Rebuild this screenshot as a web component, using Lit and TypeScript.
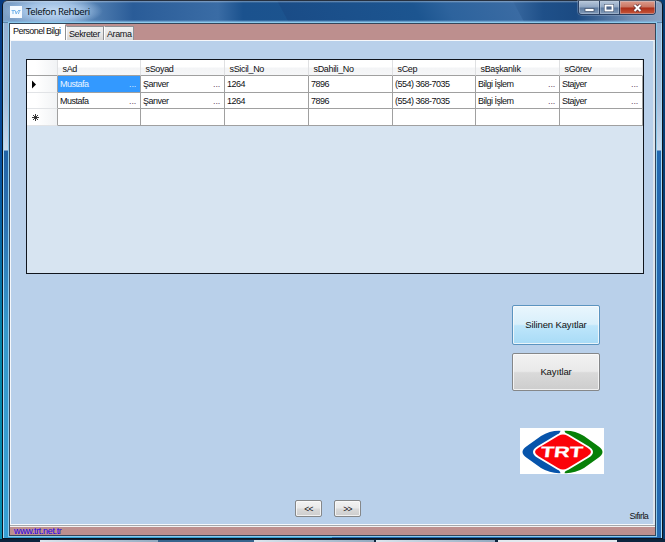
import { LitElement, html, css, svg } from "lit";
import { customElement, property } from "lit/decorators.js";

const COLUMNS = ["sAd", "sSoyad", "sSicil_No", "sDahili_No", "sCep", "sBaşkanlık", "sGörev"];
const RECORD = ["Mustafa", "Şanver", "1264", "7896", "(554) 368-7035", "Bilgi İşlem", "Stajyer"];
const TRUNCATED = [0, 1, 5, 6];

@customElement("title-bar")
class TitleBar extends LitElement {
  static styles = css`
    :host {
      display: flex;
      height: 23px;
      box-sizing: border-box;
      border-top: 1px solid #26303f;
      border-radius: 5px 5px 0 0;
      background:
        linear-gradient(#ffffff66, #ffffff00 2px),
        radial-gradient(ellipse 50px 15px at 50px 10px, #c3daf3 0, #a9c8eae0 55%, #a9c8ea00 100%),
        linear-gradient(#ffffff00 19px, #7fb3dd 21px, #35597b 22px),
        linear-gradient(62deg, #ffffff00 252px, #1a4c87 253px, #1c5590 370px, #2d639d 400px, #3a6ba3 460px, #ffffff00 461px),
        linear-gradient(90deg, #7d9fc6 0, #5c88b8 80px, #2a5c98 130px, #3a6ca5 215px, #1b528e 240px, #1d568f 370px, #31659c 420px, #3c6ca3 505px, #1f5089 540px, #1b4a82 573px, #7590b4 630px, #8ba3c2 100%);
    }
    .icon {
      width: 12px;
      height: 12px;
      margin: 5px 0 0 7px;
      background: #f5faff;
      flex: none;
    }
    .icon svg { display: block; }
    .title {
      margin: 4px 0 0 4px;
      font: 9.5px/13px "Noto Sans", sans-serif;
      letter-spacing: -0.4px;
      color: #0b1524;
      flex: 1;
    }
    .controls {
      display: flex;
      height: 14px;
      margin-right: 6px;
      border: 1px solid #2b4164;
      border-top: 0;
      border-radius: 0 0 4px 4px;
      box-sizing: border-box;
      box-shadow: 0 0 0 1px #a7bad255;
      overflow: hidden;
    }
    .control {
      width: 20px;
      border-right: 1px solid #2b4164;
      background: linear-gradient(#b6c6da, #8fa5c2 48%, #5c799f 52%, #829ab8);
      box-shadow: inset 0 0 0 1px #c8d5e466;
    }
    .control.max { width: 19px; }
    .control.close {
      width: 35px;
      border: 0;
      background: linear-gradient(#dd9c8c, #c97460 48%, #ab2d17 52%, #c8563a);
    }
    .control svg { display: block; width: 100%; height: 13px; }
  `;
  render() {
    return html`
      <div class="icon">
        <svg width="12" height="12" viewBox="0 0 12 12">
          <path d="M1.500 4.500H5M3 4.500V8M5.200 4.500L6.200 8L7.500 5M8 4.500H10.500M9.500 4.500L8.400 8" fill="none" stroke="#75b4ea" stroke-width="1" />
        </svg>
      </div>
      <div class="title">Telefon Rehberi</div>
      <div class="controls">
        <div class="control">
          <svg viewBox="0 0 20 13"><rect x="6" y="7.500" width="9" height="3" fill="#fff" stroke="#475873" stroke-width=".8" /></svg>
        </div>
        <div class="control max">
          <svg viewBox="0 0 19 13">
            <rect x="5.500" y="4.500" width="7" height="5" fill="none" stroke="#475873" stroke-width="3" />
            <rect x="5.500" y="4.500" width="7" height="5" fill="#50678a" stroke="#fff" stroke-width="1.800" />
          </svg>
        </div>
        <div class="control close">
          <svg viewBox="0 0 35 13">
            <path d="M14.500 4L20.500 10M20.500 4L14.500 10" stroke="#5f3238" stroke-width="3.600" />
            <path d="M14.500 4L20.500 10M20.500 4L14.500 10" stroke="#fff" stroke-width="2" />
          </svg>
        </div>
      </div>
    `;
  }
}

@customElement("data-grid")
class DataGrid extends LitElement {
  static styles = css`
    :host {
      display: block;
      box-sizing: border-box;
      width: 618px;
      height: 215px;
      border: 1px solid #10151d;
      background: #d7e4f1;
      font: 9px/11px "Liberation Sans", Arial, sans-serif;
      color: #101014;
    }
    .row {
      display: grid;
      grid-template-columns: 31px 83px 84px 84px 84px 83px 84px 83px;
      height: 16px;
      background: #fff;
    }
    .cell {
      display: flex;
      justify-content: space-between;
      box-sizing: border-box;
      border-right: 1px solid #a0a0a0;
      border-bottom: 1px solid #a0a0a0;
      padding: 3px 4px 0 2px;
      letter-spacing: -0.5px;
      white-space: nowrap;
      overflow: hidden;
    }
    .cell.number { letter-spacing: -0.5px; padding-left: 2px; }
    .row.head .cell {
      padding: 4px 0 0 4.5px;
      letter-spacing: -0.34px;
      border-right-color: #dfe0e2;
      background: linear-gradient(#fff 45%, #f3f4f6 55%, #f6f7f8);
    }
    .row.tall { height: 17px; }
    .row .cell.marker {
      padding: 0;
      border-bottom-color: #e1e3e6;
      background: linear-gradient(90deg, #fff 30%, #f1f3f5);
    }
    .row.head .cell.marker { border-bottom-color: #a0a0a0; }
    .marker svg { display: block; }
    .cell.selected { background: #3399ff; color: #eaf5ff; }
    .dots { color: #6c4668; letter-spacing: -0.2px; }
    .selected .dots { color: #d8edff; }
  `;
  private marker(kind: string) {
    const shape = kind === "current"
      ? svg`<path d="M5 4.500L9 8.500L5 12.500Z" fill="#000" />`
      : kind === "new"
        ? svg`<path d="M8.500 5V12M5 8.500H12M6 6L11 11M11 6L6 11" stroke="#222" stroke-width=".9" />`
        : null;
    return html`<div class="cell marker"><svg width="20" height="16">${shape}</svg></div>`;
  }
  private record(kind: string) {
    return html`<div class="row ${kind === "current" ? "tall" : ""}">
      ${this.marker(kind)}
      ${RECORD.map((value, i) => html`
        <div class="cell ${/^[\d(]/.test(value) ? "number" : ""} ${kind === "current" && i === 0 ? "selected" : ""}">
          <span>${value}</span>${TRUNCATED.includes(i) ? html`<span class="dots">...</span>` : null}
        </div>`)}
    </div>`;
  }
  render() {
    return html`
      <div class="row head">
        <div class="cell marker"></div>
        ${COLUMNS.map((name) => html`<div class="cell">${name}</div>`)}
      </div>
      ${this.record("current")} ${this.record("")}
      <div class="row tall">${this.marker("new")}${COLUMNS.map(() => html`<div class="cell"></div>`)}</div>
    `;
  }
}

@customElement("form-button")
class FormButton extends LitElement {
  @property() label = "";
  static styles = css`
    :host { display: block; }
    button {
      display: block;
      width: 100%;
      height: 100%;
      padding: 0;
      border: 1px solid #858789;
      border-radius: 2px;
      background: linear-gradient(#f2f2f2, #e9e9e9 48%, #dadada 52%, #cdcdcd);
      box-shadow: inset 0 0 0 1px #fafafacc;
      font: 9.5px/12px "Liberation Sans", Arial, sans-serif;
      letter-spacing: -0.13px;
      color: #111;
      white-space: nowrap;
    }
    :host(.hot) button {
      border-color: #5b94c0;
      background: linear-gradient(#e9f6fd, #d8effb 48%, #bee6fb 52%, #a8dbf6);
    }
    :host(.nav) button { font-size: 8.5px; letter-spacing: -0.6px; }
  `;
  render() {
    return html`<button>${this.label}</button>`;
  }
}

@customElement("trt-logo")
class TrtLogo extends LitElement {
  static styles = css`
    :host { display: block; width: 84px; height: 46px; background: #fff; }
    svg { display: block; }
    text { font: bold 15px "Liberation Sans", Arial, sans-serif; fill: #fff; stroke: #fff; stroke-width: .3px; }
  `;
  render() {
    return html`<svg width="84" height="46" viewBox="0 0 84 46">
      <path d="M42 3Q31 2 21 8L7 18Q-2 24 7 30L21 40Q31 46 42 45Z" fill="#0754ab" />
      <path d="M43 3Q54 2 64 8L78 18Q87 24 78 30L64 40Q54 46 43 45Z" fill="#078008" />
      <path d="M41 2H44L46 6H39ZM41 46H44L46 42H39Z" fill="#fff" />
      <path d="M38 7Q43 4 48 7L68 19Q76 24 68 29L48 41Q43 44 38 41L18 29Q10 24 18 19Z" fill="#fb0309" stroke="#fff" stroke-width="2" />
      <text x="20.500" y="29.300" transform="skewX(-7) translate(3.400 0)" textLength="42" lengthAdjust="spacingAndGlyphs">TRT</text>
    </svg>`;
  }
}

@customElement("app-root")
class AppRoot extends LitElement {
  static styles = css`
    :host {
      display: flex;
      flex-direction: column;
      width: 665px;
      height: 542px;
      overflow: hidden;
      background: linear-gradient(90deg, #ffffff00 50%, #063d73 50%), linear-gradient(#073a80, #064d9d 150px, #0585a8 350px, #078eb2);
      font: 9px/11px "Liberation Sans", Arial, sans-serif;
      color: #101014;
    }
    .window {
      display: flex;
      flex-direction: column;
      height: 539px;
      box-sizing: border-box;
      margin: 0 2px 0 2px;
      border: 1px solid #0c1420;
      border-top: 0;
      border-radius: 6px 6px 0 0;
      background:
        linear-gradient(90deg, #a6d8f5 1px, #ffffff00 1px, #ffffff00 658px, #a6d8f5 658px),
        linear-gradient(90deg, #ffffff00 50%, #8da5c500 50%) 0 0 / 100% 151px no-repeat,
        linear-gradient(90deg, #ffffff00 50%, #2369b0 50%) 0 151px no-repeat,
        linear-gradient(#8facd0 0, #a9bfdc 100px, #cbdaec 150px, #2163a6 151px, #2b71b1 220px, #3599cc 330px, #36a0d4);
    }
    .client {
      display: flex;
      flex-direction: column;
      flex: 1;
      margin: 0 6px 2px 6px;
      border: 1px solid #34465b;
      background: #bd8f8e;
      outline: 1px solid #8ccaec;
      outline-offset: 0;
      overflow: hidden;
    }
    .tabs { display: flex; height: 16px; align-items: flex-end; }
    .tab {
      box-sizing: border-box;
      height: 14px;
      padding: 2px 0 0 2px;
      border: 1px solid #8e9093;
      border-bottom: 0;
      border-left-color: #fff;
      background: linear-gradient(#f1f1f1, #e8e8e8 50%, #d8d8d8);
      letter-spacing: -0.4px;
      white-space: nowrap;
    }
    .tab.active { width: 56px; height: 16px; padding-top: 1px; letter-spacing: -0.55px; background: #fff; border-color: #fff; border-right-color: #8e9093; }
    .tab.secretary { width: 38px; }
    .tab.search { width: 30px; }
    .page {
      display: flex;
      flex-direction: column;
      flex: 1;
      box-sizing: border-box;
      border: 1px solid #f6f8fb;
      border-right: 2px solid #dce4ec;
      background: #b9d0ea;
    }
    data-grid { margin: 18px 0 0 15px; }
    .actions { display: flex; flex-direction: column; margin: 31px 0 0 501px; }
    .deleted { width: 88px; height: 40px; }
    .records { width: 88px; height: 38px; margin-top: 8px; }
    trt-logo { margin: 37px 0 0 8px; }
    .footer { display: flex; margin-top: 26px; padding-left: 284px; }
    .nav { width: 27px; height: 17px; margin-right: 12px; }
    .reset { margin: 11px 5px 0 auto; letter-spacing: -0.7px; }
    .status {
      height: 8px;
      box-sizing: content-box;
      border-top: 1px solid #f2f2f2;
      box-shadow: 0 -1px #a5a8ab;
      margin-top: 1px;
      padding-left: 4px;
      line-height: 9px;
    }
    .link { color: #2300e8; text-decoration: underline; letter-spacing: -0.36px; }
    .taskbar {
      display: grid;
      grid-template-columns: 40px 118px 96px 120px 2px 119px 3px 119px 48px;
      height: 3px;
      box-sizing: border-box;
      border-top: 1px solid #0b2037;
      background: #27527b;
    }
    .task { background: linear-gradient(90deg, #dce6ee, #91a9bf); }
    .task.blue { background: #37658d; }
    .task.light { background: #e2e9ef; }
    .gap { background: #0c243e; }
  `;
  render() {
    return html`
      <div class="window">
        <title-bar></title-bar>
        <div class="client">
          <div class="tabs">
            <div class="tab active">Personel Bilgi</div>
            <div class="tab secretary">Sekreter</div>
            <div class="tab search">Arama</div>
          </div>
          <div class="page">
            <data-grid></data-grid>
            <div class="actions">
              <form-button class="deleted hot" label="Silinen Kayıtlar"></form-button>
              <form-button class="records" label="Kayıtlar"></form-button>
              <trt-logo></trt-logo>
            </div>
            <div class="footer">
              <form-button class="nav" label="<<"></form-button>
              <form-button class="nav" label=">>"></form-button>
              <div class="reset">Sıfırla</div>
            </div>
          </div>
          <div class="status"><span class="link">www.trt.net.tr</span></div>
        </div>
      </div>
      <div class="taskbar">
        <div class="gap"></div><div class="task"></div><div class="task blue"></div><div class="task"></div><div class="gap"></div>
        <div class="task"></div><div class="gap"></div><div class="task light"></div><div class="gap"></div>
      </div>
    `;
  }
}
